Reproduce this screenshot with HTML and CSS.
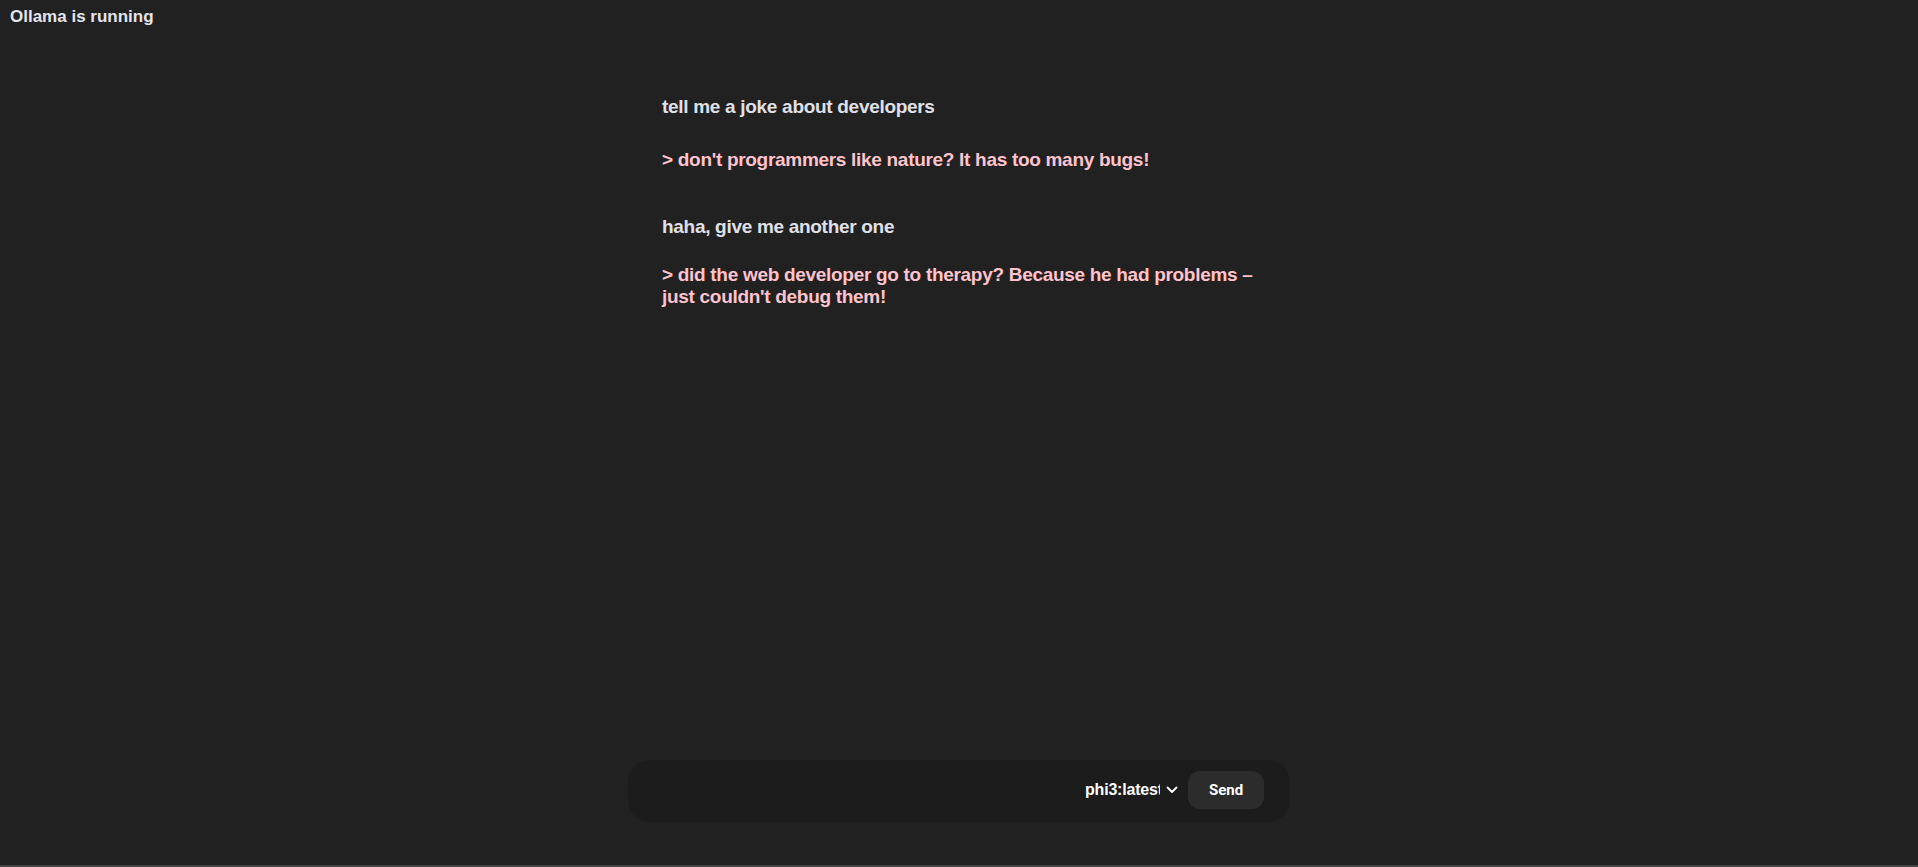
FILE: index.html
```html
<!DOCTYPE html>
<html lang="en">
<head>
<meta charset="utf-8">
<title>Ollama</title>
<link rel="stylesheet" href="styles.css">
</head>
<body>
<div class="app">
  <header class="status">Ollama is running</header>
  <main class="chat">
    <div class="thread">
      <div class="exchange first">
        <p class="msg user">tell me a joke about developers</p>
        <p class="msg reply">&gt; don't programmers like nature? It has too many bugs!</p>
      </div>
      <div class="exchange">
        <p class="msg user">haha, give me another one</p>
        <p class="msg reply">&gt; did the web developer go to therapy? Because he had problems – just couldn't debug them!</p>
      </div>
    </div>
  </main>
  <form class="composer">
    <div class="input"></div>
    <div class="model">
      <span class="model-name">phi3:latest</span>
      <svg class="chev" width="12" height="8" viewBox="0 0 12 8"><path d="M1.5 1.5 L6 6 L10.5 1.5" fill="none" stroke="#ffffff" stroke-width="1.8" stroke-linecap="round" stroke-linejoin="round"/></svg>
    </div>
    <button type="button" class="send">Send</button>
  </form>
  <div class="bottom-line"></div>
</div>
</body>
</html>
```
FILE: styles.css
```css
html, body {
  margin: 0;
  padding: 0;
  height: 100%;
  background: #212121;
}
body {
  font-family: "Liberation Sans", Arial, sans-serif;
  font-weight: 700;
  color: #e2e2e2;
  overflow: hidden;
}
.app {
  height: 100vh;
  display: flex;
  flex-direction: column;
}
.status {
  padding: 6px 10px 0;
  font-size: 17px;
  line-height: 22px;
  color: #e4e4ea;
}
.chat {
  flex: 1;
  display: flex;
  justify-content: center;
}
.thread {
  width: 604px;
  box-sizing: border-box;
  padding: 68px 0 0 5px;
  display: flex;
  flex-direction: column;
  gap: 45px;
}
.exchange {
  display: flex;
  flex-direction: column;
  gap: 26px;
}
.exchange.first {
  gap: 31px;
}
.msg {
  margin: 0;
  font-size: 19px;
  letter-spacing: -0.3px;
  line-height: 22px;
}
.user {
  color: #e0e0e8;
}
.reply {
  color: #ffc3cc;
}
.composer {
  align-self: center;
  width: 662px;
  height: 62px;
  box-sizing: border-box;
  margin: 0 0 43px;
  padding: 11px 26px 13px 20px;
  background: #1c1c1c;
  border-radius: 22px;
  display: flex;
  align-items: center;
  gap: 10px;
}
.input {
  flex: 1;
}
.model {
  display: flex;
  align-items: center;
  gap: 6px;
  color: #ffffff;
  font-size: 16px;
  letter-spacing: -0.2px;
}
.model-name {
  width: 75px;
  overflow: hidden;
  white-space: nowrap;
}
.chev {
  display: block;
}
.send {
  width: 76px;
  height: 38px;
  border: 0;
  border-radius: 12px;
  background: #2c2c2c;
  color: #ffffff;
  font-family: Roboto, "Liberation Sans", sans-serif;
  font-weight: 700;
  font-size: 15px;
  padding: 0;
}
.bottom-line {
  height: 2px;
  background: #444444;
}
```
